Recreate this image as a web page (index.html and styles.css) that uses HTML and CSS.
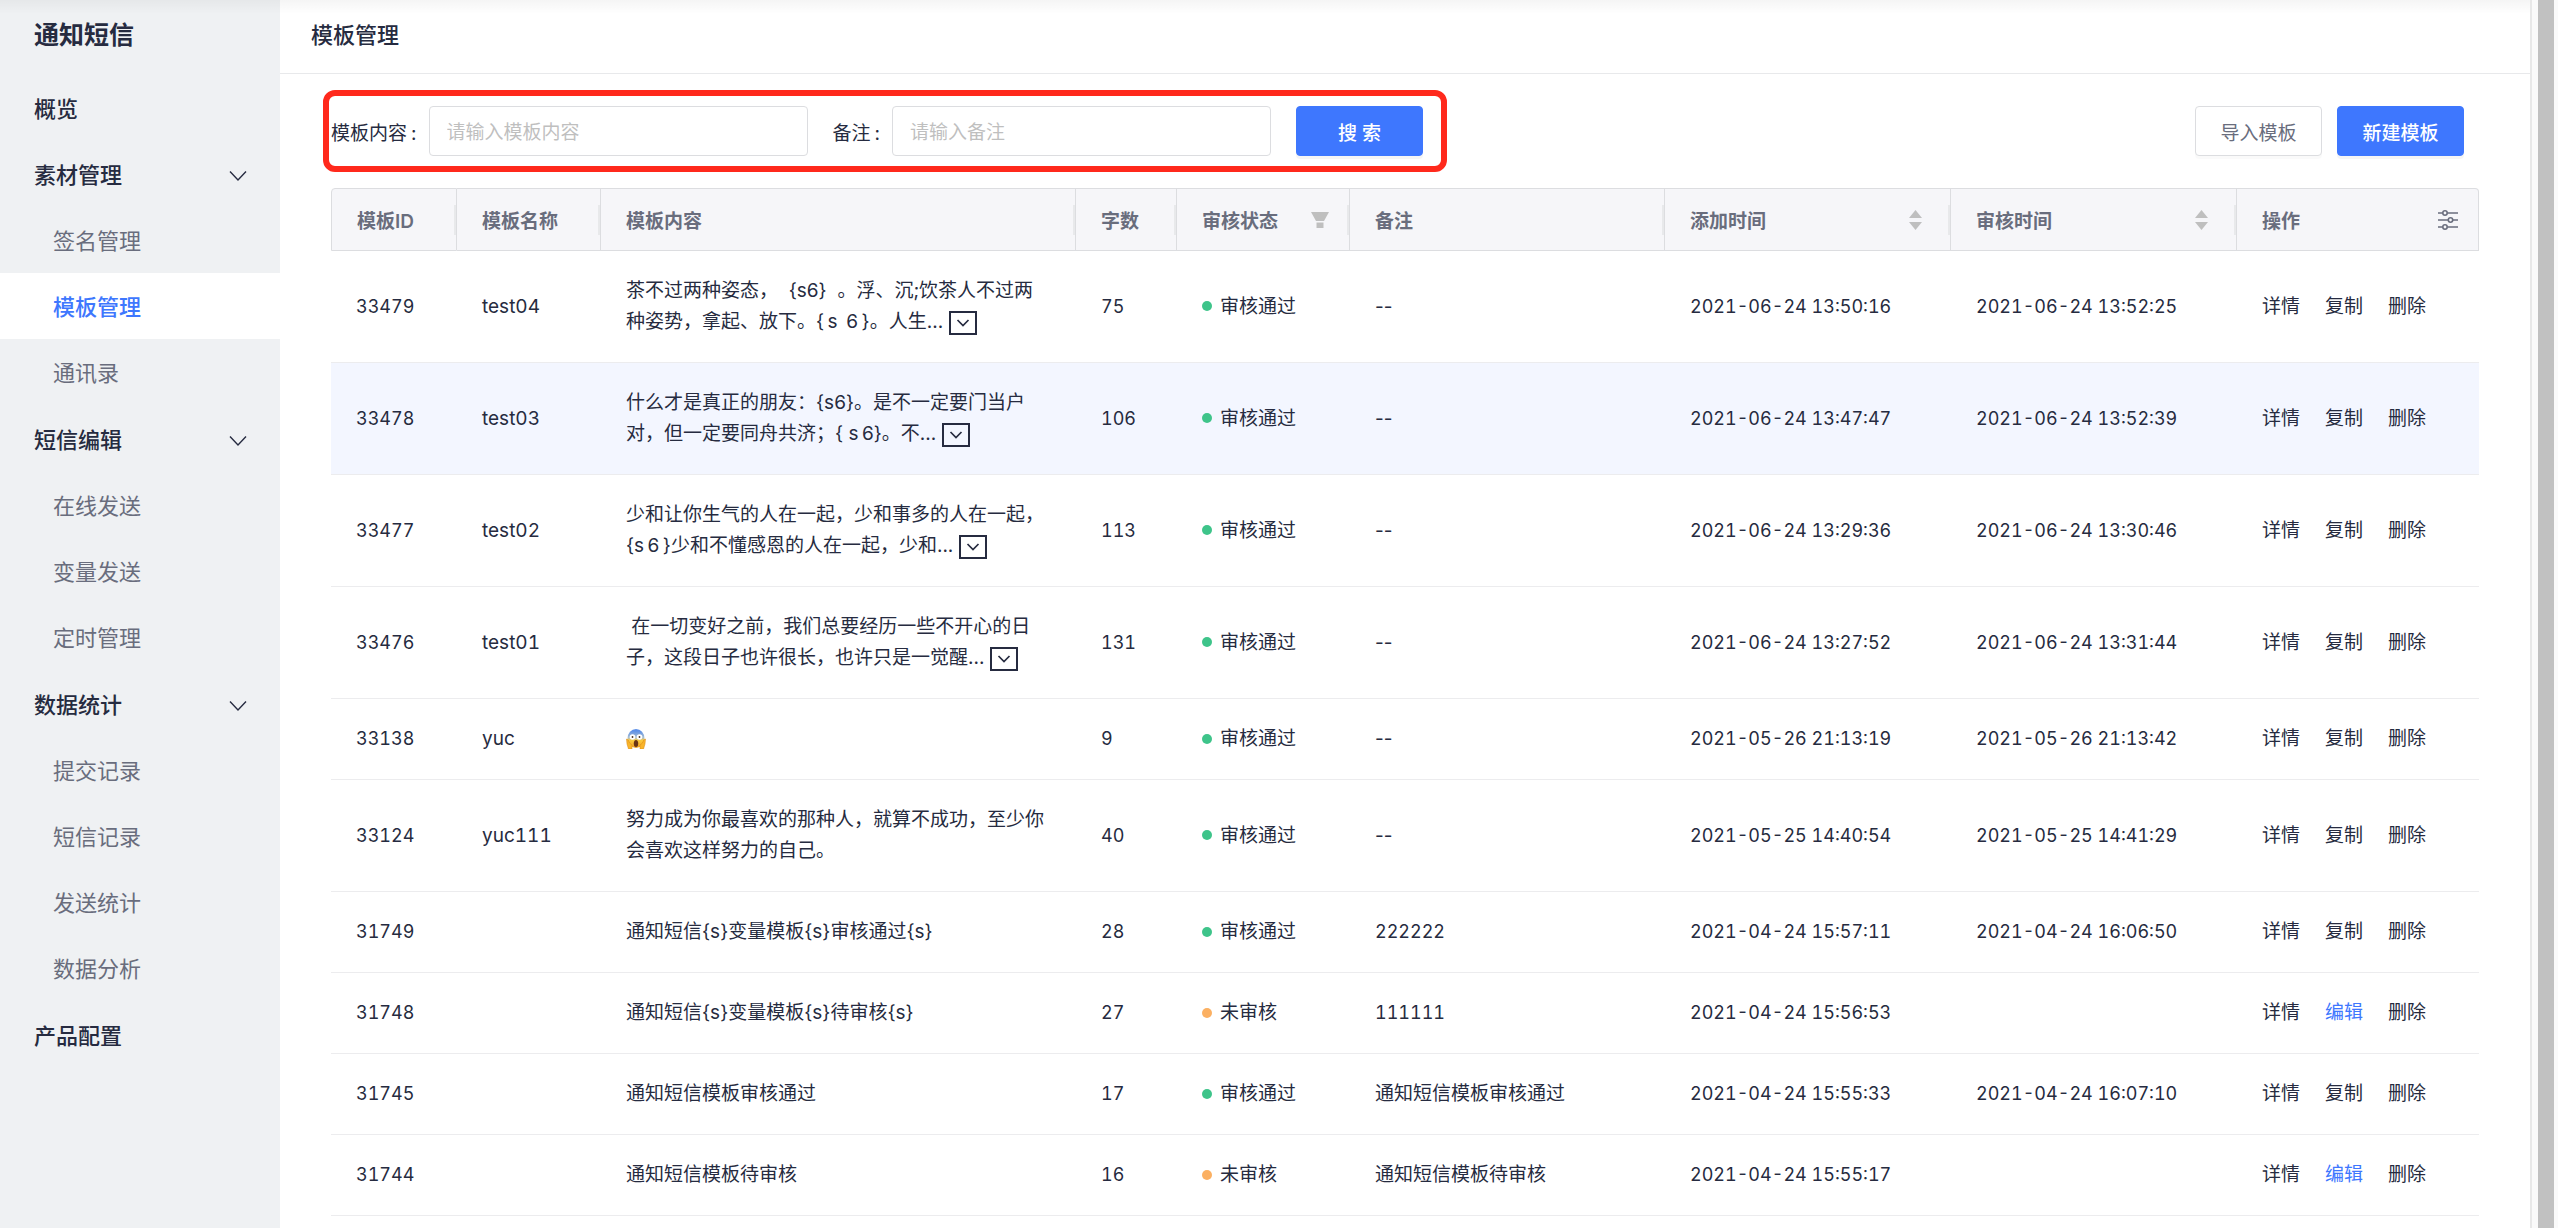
FILE: index.html
```html
<!DOCTYPE html>
<html lang="zh-CN">
<head>
  <meta charset="UTF-8">
  <title>模板管理</title>
  <link rel="stylesheet" href="styles.css">
</head>
<body>
  <!-- 公用图标 -->
  <svg class="sprite" aria-hidden="true">
    <symbol id="icon-down" viewBox="0 0 18 12"><path d="M1 1.5l8 8.5 8-8.5" fill="none" stroke="currentColor" stroke-width="1.4"/></symbol>
    <symbol id="icon-expand" viewBox="0 0 14 10"><path d="M1.500 2L7 7.500 12.500 2" fill="none" stroke="currentColor" stroke-width="1.7"/></symbol>
    <symbol id="icon-filter" viewBox="0 0 18 16"><path d="M0 0h18l-5 9H5zM5.500 10.500h7V16h-7z" fill="currentColor"/></symbol>
    <symbol id="icon-sort" viewBox="0 0 13 20"><path d="M6.500 0L13 8H0zM0 12h13l-6.500 8z" fill="currentColor"/></symbol>
    <symbol id="icon-setting" viewBox="0 0 20 20">
      <g fill="none" stroke="currentColor" stroke-width="1.6">
        <path d="M0 3h4.500M9.500 3H20M0 10h10M15 10h5M0 17h4.500M9.500 17H20"/>
        <circle cx="7" cy="3" r="2.200"/><circle cx="12.500" cy="10" r="2.200"/><circle cx="7" cy="17" r="2.200"/>
      </g>
    </symbol>
  </svg>

  <div class="layout">
    <aside class="sidebar">
      <div class="sidebar-title">通知短信</div>
      <nav class="menu">
        <a class="menu-item" href="#">概览</a>
        <div class="menu-group">
          <button class="menu-item" type="button">素材管理<svg class="menu-arrow"><use href="#icon-down"/></svg></button>
          <a class="menu-item sub" href="#">签名管理</a>
          <a class="menu-item sub active" href="#">模板管理</a>
          <a class="menu-item sub" href="#">通讯录</a>
        </div>
        <div class="menu-group">
          <button class="menu-item" type="button">短信编辑<svg class="menu-arrow"><use href="#icon-down"/></svg></button>
          <a class="menu-item sub" href="#">在线发送</a>
          <a class="menu-item sub" href="#">变量发送</a>
          <a class="menu-item sub" href="#">定时管理</a>
        </div>
        <div class="menu-group">
          <button class="menu-item" type="button">数据统计<svg class="menu-arrow"><use href="#icon-down"/></svg></button>
          <a class="menu-item sub" href="#">提交记录</a>
          <a class="menu-item sub" href="#">短信记录</a>
          <a class="menu-item sub" href="#">发送统计</a>
          <a class="menu-item sub" href="#">数据分析</a>
        </div>
        <a class="menu-item" href="#">产品配置</a>
      </nav>
    </aside>

    <main class="main">
      <header class="page-header"><h1>模板管理</h1></header>

      <div class="content">
        <div class="toolbar">
          <form class="search-form">
            <div class="field">
              <label for="content">模板内容</label>
              <input id="content" type="text" placeholder="请输入模板内容">
            </div>
            <div class="field">
              <label for="remark">备注</label>
              <input id="remark" type="text" placeholder="请输入备注">
            </div>
            <button class="btn btn-primary" type="submit">搜 索</button>
          </form>
          <div class="actions">
            <button class="btn" type="button">导入模板</button>
            <button class="btn btn-primary" type="button">新建模板</button>
          </div>
        </div>

        <table class="table">
          <colgroup>
            <col class="col-id"><col class="col-name"><col class="col-content"><col class="col-count"><col class="col-status">
            <col class="col-remark"><col class="col-time"><col class="col-time"><col class="col-ops">
          </colgroup>
          <thead>
            <tr>
              <th>模板ID</th>
              <th>模板名称</th>
              <th>模板内容</th>
              <th>字数</th>
              <th><div class="th-inner">审核状态<svg class="filter"><use href="#icon-filter"/></svg></div></th>
              <th>备注</th>
              <th><div class="th-inner">添加时间<svg class="sort"><use href="#icon-sort"/></svg></div></th>
              <th><div class="th-inner">审核时间<svg class="sort"><use href="#icon-sort"/></svg></div></th>
              <th><div class="th-inner">操作<svg class="setting"><use href="#icon-setting"/></svg></div></th>
            </tr>
          </thead>
          <tbody>
            <tr>
              <td class="num">33479</td><td class="name">test04</td>
              <td>茶不过两种姿态，&nbsp; {s6}&nbsp; 。浮、沉;饮茶人不过两<br>种姿势，拿起、放下。{&thinsp;s&nbsp;&thinsp;6&thinsp;}。人生...<button class="expand" type="button" aria-label="展开"><svg><use href="#icon-expand"/></svg></button></td>
              <td class="num">75</td><td><span class="status">审核通过</span></td><td>--</td>
              <td class="num">2021-06-24 13:50:16</td><td class="num">2021-06-24 13:52:25</td>
              <td><div class="ops"><a href="#">详情</a><a href="#">复制</a><a href="#">删除</a></div></td>
            </tr>
            <tr class="hover">
              <td class="num">33478</td><td class="name">test03</td>
              <td>什么才是真正的朋友：{s6}。是不一定要门当户<br>对，但一定要同舟共济；{ s&thinsp;6}。不...<button class="expand" type="button" aria-label="展开"><svg><use href="#icon-expand"/></svg></button></td>
              <td class="num">106</td><td><span class="status">审核通过</span></td><td>--</td>
              <td class="num">2021-06-24 13:47:47</td><td class="num">2021-06-24 13:52:39</td>
              <td><div class="ops"><a href="#">详情</a><a href="#">复制</a><a href="#">删除</a></div></td>
            </tr>
            <tr>
              <td class="num">33477</td><td class="name">test02</td>
              <td>少和让你生气的人在一起，少和事多的人在一起，<br>{s&thinsp;6&thinsp;}少和不懂感恩的人在一起，少和...<button class="expand" type="button" aria-label="展开"><svg><use href="#icon-expand"/></svg></button></td>
              <td class="num">113</td><td><span class="status">审核通过</span></td><td>--</td>
              <td class="num">2021-06-24 13:29:36</td><td class="num">2021-06-24 13:30:46</td>
              <td><div class="ops"><a href="#">详情</a><a href="#">复制</a><a href="#">删除</a></div></td>
            </tr>
            <tr>
              <td class="num">33476</td><td class="name">test01</td>
              <td>&nbsp;在一切变好之前，我们总要经历一些不开心的日<br>子，这段日子也许很长，也许只是一觉醒...<button class="expand" type="button" aria-label="展开"><svg><use href="#icon-expand"/></svg></button></td>
              <td class="num">131</td><td><span class="status">审核通过</span></td><td>--</td>
              <td class="num">2021-06-24 13:27:52</td><td class="num">2021-06-24 13:31:44</td>
              <td><div class="ops"><a href="#">详情</a><a href="#">复制</a><a href="#">删除</a></div></td>
            </tr>
            <tr>
              <td class="num">33138</td><td class="name">yuc</td>
              <td>
                <svg class="emoji" viewBox="0 0 20 20" role="img" aria-label="尖叫">
                  <defs><linearGradient id="face" x1="0" y1="0" x2="0" y2="1"><stop offset="0.1" stop-color="#5b8fe8"/><stop offset="0.45" stop-color="#a9bfd0"/><stop offset="0.6" stop-color="#fbc93d"/><stop offset="1" stop-color="#f0a020"/></linearGradient></defs>
                  <ellipse cx="10" cy="9.500" rx="8.500" ry="9.500" fill="url(#face)"/>
                  <circle cx="6.500" cy="8" r="2.800" fill="#fff"/><circle cx="13.500" cy="8" r="2.800" fill="#fff"/>
                  <circle cx="6.500" cy="8" r="0.900" fill="#4a3220"/><circle cx="13.500" cy="8" r="0.900" fill="#4a3220"/>
                  <ellipse cx="10" cy="14.500" rx="2.200" ry="3.500" fill="#6b3414"/>
                  <path d="M0.500 10q2 0 3 4l2.500 2v4H2.500Q0.500 15 0.500 10zM19.500 10q-2 0-3 4L14 16v4h3.500Q19.500 15 19.500 10z" fill="#f9b52b" stroke="#d98512" stroke-width="0.500"/>
                </svg>
              </td>
              <td class="num">9</td><td><span class="status">审核通过</span></td><td>--</td>
              <td class="num">2021-05-26 21:13:19</td><td class="num">2021-05-26 21:13:42</td>
              <td><div class="ops"><a href="#">详情</a><a href="#">复制</a><a href="#">删除</a></div></td>
            </tr>
            <tr>
              <td class="num">33124</td><td class="name">yuc111</td>
              <td>努力成为你最喜欢的那种人，就算不成功，至少你<br>会喜欢这样努力的自己。</td>
              <td class="num">40</td><td><span class="status">审核通过</span></td><td>--</td>
              <td class="num">2021-05-25 14:40:54</td><td class="num">2021-05-25 14:41:29</td>
              <td><div class="ops"><a href="#">详情</a><a href="#">复制</a><a href="#">删除</a></div></td>
            </tr>
            <tr>
              <td class="num">31749</td><td></td>
              <td>通知短信{s}变量模板{s}审核通过{s}</td>
              <td class="num">28</td><td><span class="status">审核通过</span></td><td class="num">222222</td>
              <td class="num">2021-04-24 15:57:11</td><td class="num">2021-04-24 16:06:50</td>
              <td><div class="ops"><a href="#">详情</a><a href="#">复制</a><a href="#">删除</a></div></td>
            </tr>
            <tr>
              <td class="num">31748</td><td></td>
              <td>通知短信{s}变量模板{s}待审核{s}</td>
              <td class="num">27</td><td><span class="status pending">未审核</span></td><td class="num">111111</td>
              <td class="num">2021-04-24 15:56:53</td><td></td>
              <td><div class="ops"><a href="#">详情</a><a class="edit" href="#">编辑</a><a href="#">删除</a></div></td>
            </tr>
            <tr>
              <td class="num">31745</td><td></td>
              <td>通知短信模板审核通过</td>
              <td class="num">17</td><td><span class="status">审核通过</span></td><td>通知短信模板审核通过</td>
              <td class="num">2021-04-24 15:55:33</td><td class="num">2021-04-24 16:07:10</td>
              <td><div class="ops"><a href="#">详情</a><a href="#">复制</a><a href="#">删除</a></div></td>
            </tr>
            <tr>
              <td class="num">31744</td><td></td>
              <td>通知短信模板待审核</td>
              <td class="num">16</td><td><span class="status pending">未审核</span></td><td>通知短信模板待审核</td>
              <td class="num">2021-04-24 15:55:17</td><td></td>
              <td><div class="ops"><a href="#">详情</a><a class="edit" href="#">编辑</a><a href="#">删除</a></div></td>
            </tr>
          </tbody>
        </table>
      </div>
    </main>

    <div class="scrollbar"><div class="scrollbar-thumb"></div></div>
  </div>
</body>
</html>
```
FILE: styles.css
```css
* {
  box-sizing: border-box;
}

html, body {
  margin: 0;
  height: 100%;
  overflow: hidden;
}

body {
  font-family: Inter, "Noto Sans CJK SC", sans-serif;
  font-size: 19px;
  color: #262b40;
  background: #fff;
}

a {
  color: inherit;
  text-decoration: none;
}

button, input {
  font: inherit;
  color: inherit;
}

.sprite {
  position: absolute;
  width: 0;
  height: 0;
}

.layout {
  display: flex;
  height: 100vh;
}

/* 顶部导航投下的阴影 */
.layout::before {
  content: '';
  position: absolute;
  top: 0;
  left: 0;
  right: 28px;
  height: 14px;
  background: linear-gradient(rgba(0, 0, 0, 0.04), rgba(0, 0, 0, 0));
}

/* 侧边菜单 */
.sidebar {
  flex: 0 0 280px;
  background: #eff1f3;
}

.sidebar-title {
  padding-left: 34px;
  height: 75px;
  line-height: 70px;
  font-size: 25px;
  font-weight: bold;
}

.menu-item {
  display: flex;
  align-items: center;
  justify-content: space-between;
  width: 100%;
  height: 66px;
  padding: 0 33px 2px 34px;
  border: none;
  background: none;
  font-size: 22px;
  font-weight: 500;
  cursor: pointer;
}

.menu-item.sub {
  padding-left: 53px;
  color: #696d7d;
  font-weight: normal;
}

.menu-item.active {
  background: #fff;
  color: #3e77fe;
  font-weight: 500;
}

.menu-group {
  padding-bottom: 1px;
}

.menu-arrow {
  width: 18px;
  height: 12px;
  margin-top: 6px;
}

/* 主体 */
.main {
  flex: 1;
  min-width: 0;
  overflow: hidden;
}

.page-header {
  height: 74px;
  padding-left: 31px;
  border-bottom: 1px solid #e8e9eb;
}

.page-header h1 {
  margin: 0;
  font-size: 22px;
  font-weight: 500;
  line-height: 70px;
}

.content {
  padding: 16px 51px 0;
}

.toolbar {
  display: flex;
  align-items: center;
  justify-content: space-between;
  margin-bottom: 16px;
}

.search-form {
  display: flex;
  gap: 25px;
  margin-left: -8px;
  padding: 10px 18px 10px 2px;
  border: 6px solid #ff291c;
  border-radius: 12px;
}

.field {
  display: flex;
  align-items: center;
}

.field label::after {
  content: ':';
  margin: 0 12px 0 4px;
}

.field input {
  width: 379px;
  height: 50px;
  padding: 2px 17px 0;
  border: 1px solid #dcdde0;
  border-radius: 4px;
  background: #fff;
}

.field input::placeholder {
  color: #bfbfbf;
}

.actions {
  display: flex;
  gap: 15px;
  padding-right: 15px;
}

.btn {
  width: 127px;
  height: 50px;
  padding: 0;
  border: 1px solid #dcdde0;
  border-radius: 4px;
  background: #fff;
  color: #696d7d;
  box-shadow: 0 3px 0 rgba(0, 0, 0, 0.02);
  cursor: pointer;
}

.btn-primary {
  border-color: #3e77fe;
  background: #3e77fe;
  color: #fff;
  font-weight: 500;
  box-shadow: 0 3px 0 rgba(0, 0, 0, 0.04);
}

/* 表格 */
.table {
  width: 100%;
  table-layout: fixed;
  border-collapse: separate;
  border-spacing: 0;
}

.col-id { width: 126px; }
.col-name { width: 144px; }
.col-count { width: 101px; }
.col-status { width: 173px; }
.col-remark { width: 315px; }
.col-time { width: 286px; }
.col-ops { width: 242px; }

.table th {
  position: relative;
  height: 63px;
  padding: 0 20px 0 25px;
  border: 1px solid #dcdde0;
  border-left: none;
  background: #f6f6f9;
  color: #696d7d;
  font-weight: 600;
  text-align: left;
}

.table th:first-child {
  border-left: 1px solid #dcdde0;
  border-top-left-radius: 4px;
}

.table th:last-child {
  border-top-right-radius: 4px;
}

/* 列宽拖拽条 */
.table th:not(:last-child)::after {
  content: '';
  position: absolute;
  top: 16px;
  right: 0;
  width: 2px;
  height: 30px;
  background: #e8e9eb;
}

.th-inner {
  display: flex;
  align-items: center;
  justify-content: space-between;
}

.filter {
  width: 18px;
  height: 16px;
  color: #bfbfbf;
}

.sort {
  width: 13px;
  height: 20px;
  margin-right: 8px;
  color: #bfbfbf;
}

.setting {
  width: 20px;
  height: 20px;
}

.table td {
  padding: 24px 0 25px 25px;
  border-bottom: 1px solid #ececee;
  line-height: 31px;
  white-space: nowrap;
}

.table .num {
  font-size: 18px;
  font-variant-numeric: tabular-nums;
}

.table .name {
  font-variant-numeric: tabular-nums;
}

.table tr.hover td {
  background: #f3f6ff;
}

.expand {
  display: inline-flex;
  align-items: center;
  justify-content: center;
  width: 28px;
  height: 24px;
  margin-left: 6px;
  padding: 0;
  border: 2px solid #262b40;
  background: none;
  vertical-align: middle;
  cursor: pointer;
}

.expand svg {
  width: 14px;
  height: 10px;
}

.emoji {
  display: block;
  width: 20px;
  height: 20px;
}

.status {
  display: flex;
  align-items: center;
  gap: 8px;
}

.status::before {
  content: '';
  width: 10px;
  height: 10px;
  border-radius: 50%;
  background: #3ec48a;
}

.status.pending::before {
  background: #fbb062;
}

.ops {
  display: flex;
  gap: 25px;
}

.ops .edit {
  color: #3e77fe;
}

/* 滚动条 */
.scrollbar {
  flex: 0 0 28px;
  padding: 0 4px 0 6px;
  border-left: 2px solid #e8e8e8;
  background: #fafafa;
}

.scrollbar-thumb {
  height: 100%;
  background: #c1c1c1;
}
```
